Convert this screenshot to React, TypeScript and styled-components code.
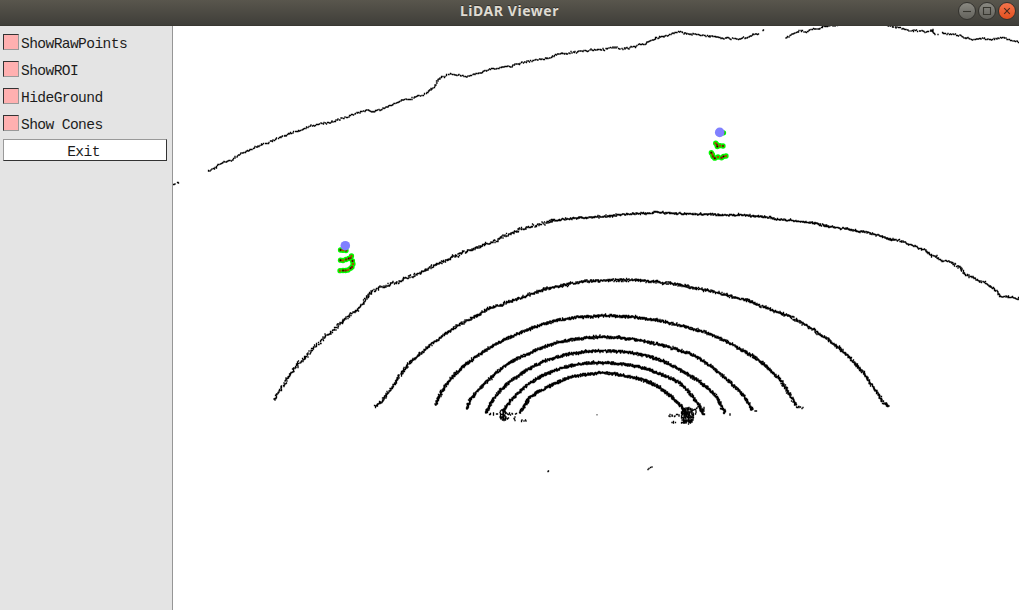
import React from 'react';
import styled, { createGlobalStyle } from 'styled-components';

const GlobalStyle = createGlobalStyle`
  html, body { margin: 0; padding: 0; }
  body { background: #fff; overflow: hidden; }
`;

const Window = styled.div`
  display: flex;
  flex-direction: column;
  width: 1019px;
  height: 610px;
  overflow: hidden;
  background: #fff;
`;

const TitleBar = styled.header`
  display: grid;
  grid-template-columns: 1fr auto 1fr;
  align-items: center;
  flex: none;
  height: 26px;
  box-sizing: border-box;
  border-bottom: 1px solid #393832;
  background: linear-gradient(#59564d, #3f3e39);
`;

const Title = styled.h1`
  grid-column: 2;
  margin: 0 0 4px;
  font: 700 14px/20px 'Noto Sans', 'Open Sans', sans-serif;
  letter-spacing: 0.55px;
  color: #dfdbd2;
  text-shadow: 0 -1px 0 #33322e;
`;

const WindowControls = styled.div`
  display: flex;
  justify-content: flex-end;
  gap: 2px;
  padding: 0 3px 3px 0;
`;

const ControlButton = styled.button<{ $accent?: boolean }>`
  display: block;
  width: 18px;
  height: 18px;
  padding: 0;
  border: 1px solid #33322e;
  border-radius: 50%;
  background: ${(p) => (p.$accent ? 'linear-gradient(#f3744c, #e2501f)' : 'linear-gradient(#8a8982, #63625c)')};

  svg { display: block; }
`;

const Body = styled.main`
  display: flex;
  flex: 1;
  min-height: 0;
`;

const Sidebar = styled.aside`
  display: flex;
  flex-direction: column;
  flex: none;
  width: 173px;
  box-sizing: border-box;
  padding: 8px 6px 0 3px;
  border-right: 1px solid #969696;
  background: #e4e4e4;
  font: 14.6px/16px 'Liberation Mono', monospace;
  letter-spacing: -0.6px;
  color: #1c1c1c;
`;

const Toggle = styled.div`
  display: flex;
  align-items: flex-start;
  height: 27px;
  gap: 2px;
`;

const Swatch = styled.span`
  box-sizing: border-box;
  width: 16px;
  height: 16px;
  border: 1px solid;
  border-color: #333 #999 #999 #333;
  background: #ffb0b0;
`;

const ToggleLabel = styled.span`
  padding-top: 2px;
`;

const ExitButton = styled.button`
  height: 22px;
  width: 164px;
  margin-top: -3px;
  padding: 3px 0 0 0;
  border: 1px solid;
  border-color: #999 #333 #333 #999;
  background: #fff;
  color: inherit;
  font: inherit;
  letter-spacing: inherit;
  text-indent: -3px;
`;

const Viewport = styled.svg`
  display: block;
  flex: none;
  width: 846px;
  height: 584px;
  background: #fff;
`;

type Scan = { density: number; spread: number; line: number[]; wander?: number };

const scans: Scan[] = [
  { density: 0.95, spread: 0.9, wander: 1.3, line: [208,170.5,215,168,223,163,229,161,240,155,246,152,256,147,271,141.5,286,134.5,295,131.5,318,124.5,333,122,346,117,362,112,368,110.5,373,112,386,108,397,102,419,96,432,89,437,82,441,77.5,449,74.5,460,75,465,76,478,74,488,69.5,500,68,513,65,527,62,542,60.5,550,58,560,55,575,52,595,50,600,50,620,48,633,46.5,648,43,658,38.5,663,35.5,678,33,687,33,694,34,706,35.5,716,37,727,39,742,38,751,36.5,759,35] },
  { density: 0.9, spread: 0.8, wander: 1, line: [786,38,792,34.5,800,31,808,32,812,29.5,820,28.5,824,27,832,26,850,24.5,880,24.8,890,26,898,28,905,29,912,30,928,31.5,932,31,935,35] },
  { density: 0.9, spread: 0.9, wander: 1.3, line: [942,32.5,955,35,970,38,980,39.5,990,38.5,1000,38.5,1010,40,1019,42] },
  { density: 1.6, spread: 1.9, wander: 1, line: [274,399.5,280,390,288,378,297,366,310,352,331,332,345,319,360,308,367,297,375,290,388,285,403,279.5,420,272.5,440,262.5,456,256,472,249.5,490,242.5,510,234.5,530,227,553,220.5] },
  { density: 1.9, spread: 1.15, wander: 0.7, line: [553,220.5,570,218.5,595,217,620,215,650,213,660,212.5,680,213.5,710,214.5,740,215.5,760,216.5,785,220,810,222.5,832,227,852,230,873,234,892,240] },
  { density: 1.4, spread: 1.2, wander: 1.3, line: [892,240,900,241,912,245,925,250,936,257,955,265,960,268,964,273,978,280,993,288,1003,296,1012,298,1019,300] },
  { density: 2.5, spread: 1.7, line: [375,407,383,400,390,390,400,375,410,363,425,350,445,334,465,322,480,314,486,309.5,500,305,520,298,545,289.5,560,286,580,282,600,280.5,620,280,645,281,670,283.5,690,287,715,292,738,298,750,301,763,307,790,316.5,810,328,830,341,845,353,860,369,867,378,875,390,883,401,889,406] },
  { density: 3.5, spread: 1.6, line: [436,405,441,393,450,380,463,367,480,354,500,342,520,333,545,323.5,570,318,600,316,620,316,645,318.5,670,323,700,331,720,338,740,349,757,359,770,370,780,380,788,392,796,405] },
  { density: 3.8, spread: 1.6, line: [467,409,471,399,480,388,500,370,515,360,530,353,545,346.5,560,342,580,338.5,605,337,630,339,653,343,675,349,697,357,718,372,732,384,743,395,748,402,752,410] },
  { density: 4.2, spread: 1.6, line: [486,413,492,401,503,388,518,376,530,368,550,359,575,353,600,351,625,352,647,356,665,362,680,370,697,380,713,393,720,404,725,413] },
  { density: 4.4, spread: 1.65, line: [503,412,508,404,520,391,535,380,550,372.5,570,366,590,363,610,363,630,365,647,369,670,378,682,385,693,397,699,406,704,415] },
  { density: 4.7, spread: 1.65, line: [520,413,527,402,533,395,550,386,570,377.5,585,374.5,603,373,620,375,640,379,655,385,667,393,678,403,687,414] },
];

/** x, y, horizontal radius, vertical radius, number of returns */
const clusters = [
  [503, 415, 3.5, 6, 55], [509, 414, 9, 1, 16], [493, 414, 5, 1, 9], [515, 419, 3, 2, 5],
  [524, 420.5, 4, 1, 6], [507, 419, 6, 1.3, 8], [687.5, 415.5, 6.5, 8.5, 150], [692, 411, 6, 4, 18],
  [687, 421.5, 6, 2, 22], [682, 423, 5, 0.5, 7], [672, 416, 4, 2.5, 8], [679, 415, 4, 1, 5], [673, 422.5, 3, 1, 4],
  [700, 408, 5, 2, 7], [703, 412, 2, 3, 9], [755, 411, 2, 0.5, 3], [800, 407.5, 4, 1.5, 9],
  [730, 414.5, 1, 0.5, 2], [174.5, 185, 2, 1.3, 5], [177.5, 182.5, 1, 0.8, 3],
  [548.5, 471.3, 0.6, 0.4, 2], [763, 30.5, 0.7, 0.7, 2], [938, 34, 0.5, 0.5, 1], [933, 32, 1, 3, 4],
];

const strays = [648, 469.5, 649, 468.5, 650.5, 467.5, 652, 467];

const createRandom = (seed: number) => () => {
  seed = (seed * 1664525 + 1013904223) >>> 0;
  return seed / 4294967296;
};

const random = createRandom(73);
const dot = (x: number, y: number) => `M${(Math.round(x * 2) / 2).toFixed(1)} ${(Math.round(y * 2) / 2).toFixed(1)}h.01`;

/** Catmull-Rom interpolation between b and c */
const spline = (a: number, b: number, c: number, d: number, t: number) =>
  0.5 * (2 * b + (c - a) * t + (2 * a - 5 * b + 4 * c - d) * t * t + (3 * b - a - 3 * c + d) * t * t * t);

const traceScan = ({ density, spread, line, wander = 0.5 }: Scan) => {
  const marks: string[] = [];
  const last = line.length / 2 - 1;
  const at = (i: number) => {
    const k = Math.max(0, Math.min(last, i));
    return [line[k * 2], line[k * 2 + 1]];
  };
  let drift = 0;
  for (let i = 0; i < last; i++) {
    const [p, q, r, s] = [at(i - 1), at(i), at(i + 1), at(i + 2)];
    const dx = r[0] - q[0];
    const dy = r[1] - q[1];
    const length = Math.hypot(dx, dy);
    const count = Math.round(length * density);
    for (let k = 0; k < count; k++) {
      const t = (k + random() * 0.6) / count;
      drift = drift * 0.75 + (random() - 0.5) * wander;
      const offset = (random() + random() - 1) * spread + drift;
      marks.push(dot(spline(p[0], q[0], r[0], s[0], t) - (dy / length) * offset, spline(p[1], q[1], r[1], s[1], t) + (dx / length) * offset));
    }
  }
  return marks.join('');
};

const scatter = ([x, y, rx, ry, count]: number[]) =>
  Array.from({ length: count }, () => {
    const angle = random() * Math.PI * 2;
    const reach = Math.pow(random(), 0.6);
    return dot(x + Math.cos(angle) * reach * rx, y + Math.sin(angle) * reach * ry);
  }).join('');

const cloud =
  scans.map(traceScan).join('') +
  clusters.map(scatter).join('') +
  strays.map((x, i) => (i % 2 ? '' : dot(x, strays[i + 1]))).join('');
const origin = 'M597 414.8h.01';

type Cone = { center: [number, number]; hits: [number, number][] };

const cones: Cone[] = [
  {
    center: [719.7, 132.4],
    hits: [[723.5, 132.8], [715.7, 143.2], [717, 144.7], [717.3, 146.5], [720, 145.7], [723, 146],
      [711.3, 152.7], [712.4, 154.5], [713, 156.5], [714.8, 158.2], [718, 157], [721.5, 157.8], [723.5, 156.5], [726, 156]],
  },
  {
    center: [345.3, 245.7],
    hits: [[340.5, 250], [343, 250.3], [346, 250.5], [340.5, 260.2], [343, 260.5], [346, 259.5], [348.8, 258.5], [351.5, 256],
      [350.5, 258], [352.5, 261], [353, 264], [352, 267], [350.5, 268.3], [348, 270], [345.5, 270.5], [343, 270.5], [340, 270.7]],
  },
];

const ConeMark = ({ center, hits }: Cone) => (
  <g>
    {hits.map(([x, y], i) => <circle key={i} cx={x} cy={y} r="2.65" fill="#00fa00" />)}
    {hits.map(([x, y], i) => (
      <g key={i}>
        <circle cx={x} cy={y} r="1.25" fill={i % 3 === 1 ? '#a05500' : '#7b2900'} />
        {i % 3 === 0 && <circle cx={x} cy={y} r=".7" fill="#180000" />}
      </g>
    ))}
    <circle cx={center[0]} cy={center[1]} r="4.8" fill="#8080ff" />
  </g>
);

const options = ['ShowRawPoints', 'ShowROI', 'HideGround', 'Show Cones'];

const controls = [
  { name: 'Minimize', path: 'M4 8.5h8' },
  { name: 'Maximize', path: 'M4.5 4.5h7v7h-7z' },
  { name: 'Close', path: 'M5.2 5.2l5.6 5.6M10.8 5.2l-5.6 5.6', accent: true },
];

export default function App() {
  return (
    <Window>
      <GlobalStyle />
      <TitleBar>
        <Title>LiDAR Viewer</Title>
        <WindowControls>
          {controls.map(({ name, path, accent }) => (
            <ControlButton key={name} aria-label={name} $accent={accent}>
              <svg width="16" height="16" viewBox="0 0 16 16" fill="none" stroke={accent ? '#4a2a1d' : '#37362f'} strokeWidth="1.1">
                <path d={path} />
              </svg>
            </ControlButton>
          ))}
        </WindowControls>
      </TitleBar>
      <Body>
        <Sidebar>
          {options.map((name) => (
            <Toggle key={name}>
              <Swatch />
              <ToggleLabel>{name}</ToggleLabel>
            </Toggle>
          ))}
          <ExitButton>Exit</ExitButton>
        </Sidebar>
        <Viewport viewBox="173 26 846 584">
          <path d={cloud} stroke="#000" strokeWidth="1.3" strokeLinecap="square" />
          <path d={origin} stroke="#777" strokeWidth="1.4" strokeLinecap="square" />
          {cones.map((cone, i) => <ConeMark key={i} {...cone} />)}
        </Viewport>
      </Body>
    </Window>
  );
}
